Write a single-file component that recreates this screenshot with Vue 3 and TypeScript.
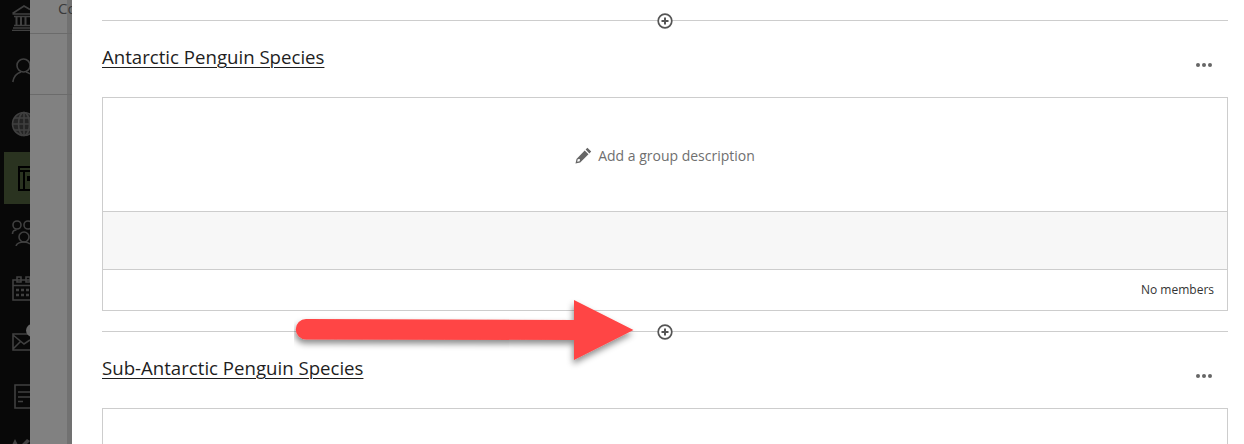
<script setup lang="ts">
interface Group { name: string; full: boolean }
const groups: Group[] = [
  { name: 'Antarctic Penguin Species', full: true },
  { name: 'Sub-Antarctic Penguin Species', full: false },
]
</script>

<template>
  <div class="page">
    <nav class="nav">
      <svg class="ico i1" width="30" height="28" viewBox="0 0 30 28" fill="none" stroke="#404040" stroke-width="1.600">
        <path d="M12.500 10.500 24 3l6 3.500M12.500 11H30M14 13.500h16M14 22.500h16M13 25h17M12 27.500h18" />
        <path d="M16.500 14v8M21 14v8M25.500 14v8" stroke-width="2" />
      </svg>
      <svg class="ico i2" width="30" height="26" viewBox="0 0 30 26" fill="none" stroke="#404040" stroke-width="1.600">
        <circle cx="23.500" cy="7.500" r="6.500" />
        <path d="M12.800 24c1-6 4.500-9 8.200-10M26 14c2 .5 3 1 4 2" />
      </svg>
      <svg class="ico i3" width="30" height="26" viewBox="0 0 30 26" fill="none" stroke="#404040" stroke-width="1.600">
        <circle cx="24" cy="13" r="11.500" fill="#252525" />
        <ellipse cx="24" cy="13" rx="5.500" ry="11.500" />
        <path d="M12.500 13H30M14 7h16M14 19h16M24 1v24" />
      </svg>
      <div class="active">
        <svg width="26" height="52" viewBox="0 0 26 52" fill="none" stroke="#000" stroke-width="2">
          <path d="M26 15H15v23h11M15 19h11M20 19v19" />
          <rect x="23" y="24" width="3" height="5" fill="#000" stroke="none" />
        </svg>
      </div>
      <svg class="ico i5" width="30" height="28" viewBox="0 0 30 28" fill="none" stroke="#404040" stroke-width="1.600">
        <circle cx="17" cy="7" r="4" />
        <circle cx="28" cy="7" r="4" />
        <circle cx="24" cy="19" r="5" />
        <path d="M12.500 16c0-3 2-4 4-4M16 28c1-3 4-4 8-4s5 1 6 2" />
      </svg>
      <svg class="ico i6" width="30" height="26" viewBox="0 0 30 26" fill="none" stroke="#404040" stroke-width="1.600">
        <path d="M30 5H13v20h17M13 10.500h17M17 2h4v5h-4zM26 2h4v5h-4z" />
        <path d="M16 15h3M21 15h3M26 15h3M16 20h3M21 20h3M26 20h3" stroke-width="2.500" />
      </svg>
      <div class="mail-wrap">
        <svg class="ico" width="30" height="28" viewBox="0 0 30 28" fill="none" stroke="#404040" stroke-width="1.600">
          <path d="M30 11H13v16h17M13 12l11 9 6-4M13 26l8-8" />
        </svg>
        <i class="badge"></i>
      </div>
      <svg class="ico i8" width="30" height="26" viewBox="0 0 30 26" fill="none" stroke="#404040" stroke-width="1.600">
        <path d="M30 1H15v23h15M18 8h12M18 13h12M18 17.500h5" />
      </svg>
      <svg class="ico i9" width="30" height="6" viewBox="0 0 30 6" fill="#404040">
        <path d="M12 6l3-6 3 6zM21 6l6-6 3 2-4 4z" />
      </svg>
    </nav>

    <aside class="shade">
      <div class="shade-title"><span>Co</span></div>
      <div class="shade-band"></div>
      <div class="shade-rest"></div>
    </aside>

    <main class="panel">
      <section v-for="g in groups" :key="g.name" class="group">
        <div class="divider">
          <svg class="plus" width="16" height="16" viewBox="0 0 16 16" fill="none" stroke="#555" stroke-width="1.700">
            <circle cx="8" cy="8" r="6.800" fill="#fff" />
            <path d="M8 4.500v7M4.500 8h7" stroke-width="2" />
          </svg>
        </div>
        <div class="head">
          <h2 class="title">{{ g.name }}</h2>
          <div class="dots"><i></i><i></i><i></i></div>
        </div>
        <div class="card">
          <div class="desc">
            <template v-if="g.full">
              <svg width="17" height="17" viewBox="0 0 17 17" fill="#666">
                <path d="M12.400.8l3.800 3.800-1.800 1.800-3.800-3.800zM9.700 3.500l3.800 3.800-8.300 8.300-4.700 1 1-4.700zM2.700 12.300l-.5 2.500 2.500-.5.300-1.700-.6-.6z" fill-rule="evenodd" />
              </svg>
              <span>Add a group description</span>
            </template>
          </div>
          <template v-if="g.full">
            <div class="band"></div>
            <div class="foot">No members</div>
          </template>
        </div>
      </section>
    </main>

    <svg class="arrow" width="360" height="80" viewBox="0 0 360 80">
      <defs>
        <filter id="sh" x="-5%" y="-20%" width="110%" height="160%">
          <feDropShadow dx="-1" dy="4" stdDeviation="3" flood-color="#000" flood-opacity=".45" />
        </filter>
      </defs>
      <path filter="url(#sh)" fill="#ff4545" d="M12 20 L280 21 V1 L339.500 31 L280 61 V41 L12 40.500 A10.250 10.250 0 0 1 12 20Z" />
    </svg>
  </div>
</template>

<style>
html, body { margin: 0; overflow: hidden; }
</style>

<style scoped>
.page {
  position: relative;
  display: flex;
  width: 1244px;
  height: 444px;
  overflow: hidden;
  font-family: "Open Sans", "Liberation Sans", sans-serif;
  background: #fff;
}
.nav {
  width: 30px;
  flex: none;
  background: #080808;
  display: flex;
  flex-direction: column;
  overflow: hidden;
}
.ico { flex: none; display: block; }
.i1 { margin-top: 3px; }
.i2 { margin-top: 27px; }
.i3 { margin-top: 27px; }
.i5 { margin-top: 14px; }
.i6 { margin-top: 29px; }
.i8 { margin-top: 33px; }
.i9 { margin-top: 29px; }
.active {
  flex: none;
  margin: 15px 0 0 4px;
  height: 52px;
  background: #2a3320;
}
.active svg { display: block; }
.mail-wrap {
  position: relative;
  flex: none;
  height: 28px;
  margin-top: 22px;
}
.badge {
  position: absolute;
  left: 26px;
  top: 1px;
  width: 13px;
  height: 13px;
  border-radius: 50%;
  background: #666;
}
.shade {
  width: 42px;
  flex: none;
  display: flex;
  flex-direction: column;
  background: #818181;
  box-shadow: inset -5px 0 0 #717171;
}
.shade-title {
  height: 33px;
  border-bottom: 1px solid #6b6b6b;
  white-space: nowrap;
  font-size: 15px;
  line-height: 16px;
  color: #3a3a3a;
}
.shade-title span { display: block; width: 14px; margin-left: 28px; overflow: hidden; }
.shade-band { height: 60px; border-bottom: 1px solid #6b6b6b; }
.shade-rest { flex: 1; }
.panel {
  flex: 1;
  padding: 20px 16px 0 30px;
  min-width: 0;
}
.group { display: block; }
.divider {
  position: relative;
  height: 1px;
  background: #cdcdcd;
}
.plus {
  position: absolute;
  left: 555px;
  top: -7px;
}
.head {
  display: flex;
  justify-content: space-between;
  height: 76px;
}
.title {
  margin: 23px 0 0;
  font-size: 18.640px;
  line-height: 25px;
  height: 25px;
  font-weight: 500;
  color: #1e1e1e;
  text-decoration: underline;
  text-underline-offset: 3px;
  text-decoration-thickness: 1px;
}
.dots {
  display: flex;
  gap: 2px;
  margin: 42px 16px 0 0;
  height: 5px;
}
.dots i {
  display: block;
  width: 4px;
  height: 4px;
  border-radius: 50%;
  background: #666;
}
.card {
  border: 1px solid #cdcdcd;
  margin-bottom: 20px;
}
.desc {
  height: 113px;
  padding-top: 2px;
  box-sizing: border-box;
  display: flex;
  align-items: center;
  justify-content: center;
  gap: 6px;
  font-size: 14px;
  color: #6f6f6f;
}
.band {
  height: 57px;
  background: #f7f7f7;
  border-top: 1px solid #cdcdcd;
  border-bottom: 1px solid #cdcdcd;
}
.foot {
  height: 40px;
  line-height: 40px;
  padding-right: 13px;
  text-align: right;
  font-size: 12px;
  color: #333;
}
.arrow {
  position: absolute;
  left: 294px;
  top: 299px;
}
</style>
